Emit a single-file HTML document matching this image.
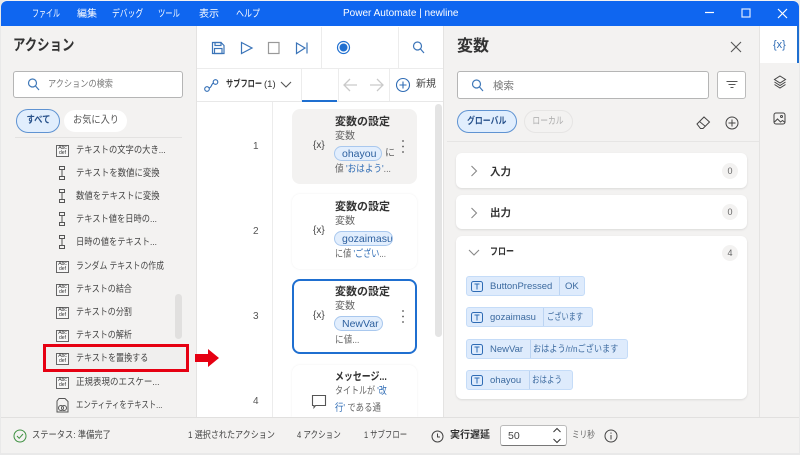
<!DOCTYPE html>
<html lang="ja"><head><meta charset="utf-8"><title>Power Automate</title>
<style>
html,body{margin:0;padding:0;width:800px;height:455px;overflow:hidden;background:#e9e9e9}
body{font-family:"Liberation Sans","Noto Sans CJK JP",sans-serif;position:relative;color:#323130}
.a,.t{position:absolute}
.t{white-space:nowrap;line-height:14px;font-size:10px;transform-origin:left center}
svg{position:absolute;overflow:visible}
.abc{position:absolute;left:56px;width:11px;height:10px;border:1px solid #666;background:#f7f7f7;font-size:5px;line-height:5px;text-align:center;color:#333}
.l{left:76px;color:#444;font-size:9.6px}
.card{position:absolute;left:292px;width:125px;border-radius:8px;background:#fff;box-shadow:0 0 2px rgba(0,0,0,.07)}
.pill{position:absolute;left:334px;height:15px;line-height:14px;border:1px solid #a9c8ee;border-radius:8px;background:#e2eefd;color:#2c5f9e;font-size:10.5px;box-sizing:border-box;padding-left:7px;overflow:hidden}
.vb{position:absolute;left:466px;height:20px;border:1px solid #c5dcf8;border-radius:3px;background:#deebfc;box-sizing:border-box;color:#3c6a9f;font-size:9.5px;line-height:19px;white-space:nowrap}
.vb i{position:absolute;top:0;bottom:0;width:1px;background:#bcd4f2}
.vb span{position:absolute;top:0;transform-origin:left center}
.acc{position:absolute;left:456px;width:291px;background:#fff;border-radius:6px;box-shadow:0 1px 2px rgba(0,0,0,.1)}
.bd{position:absolute;left:722px;width:16px;height:16px;border-radius:50%;background:#f3f2f1;color:#666;font-size:9px;line-height:16px;text-align:center}
.q{color:#2f6cb5}
.c{display:inline-block}
</style></head><body>
<!-- window -->
<div class="a" style="left:1px;top:0;width:798px;height:453px;background:#f3f2f1;border-radius:6px;overflow:hidden"></div>
<!-- title bar -->
<div class="a" style="left:1px;top:1px;width:798px;height:25px;background:#0f66f0;border-radius:6px 6px 0 0"></div>
<div class="t" style="left:32px;top:8px;color:#fff;transform:scaleX(.7)">ファイル</div>
<div class="t" style="left:77px;top:8px;color:#fff">編集</div>
<div class="t" style="left:112px;top:8px;color:#fff;transform:scaleX(.78)">デバッグ</div>
<div class="t" style="left:158px;top:8px;color:#fff;transform:scaleX(.73)">ツール</div>
<div class="t" style="left:199px;top:8px;color:#fff">表示</div>
<div class="t" style="left:236px;top:8px;color:#fff;transform:scaleX(.8)">ヘルプ</div>
<div class="t" style="left:343px;top:7px;color:#fff;font-size:10px">Power Automate | newline</div>
<svg style="left:0;top:0" width="800" height="30" fill="none" stroke="#fff" stroke-width="1.2">
<path d="M705 12.500h9"/><rect x="742" y="9" width="8" height="8" stroke="#dfeaff"/><path d="M778 9l9 9M787 9l-9 9"/></svg>

<!-- left panel -->
<div class="t" style="left:13px;top:37px;font-size:15.5px;line-height:18px;font-weight:bold;color:#333;transform:scaleX(.8)">アクション</div>
<div class="a" style="left:13px;top:71px;width:168px;height:25px;background:#fff;border:1px solid #b5b5b5;border-radius:3px"></div>
<svg style="left:27px;top:78px" width="14" height="14" fill="none" stroke="#3f78b8" stroke-width="1.2"><circle cx="5.500" cy="5" r="4"/><path d="M8.500 8l3.500 4"/></svg>
<div class="t" style="left:48px;top:78px;color:#777;font-size:9.5px;transform:scaleX(.86)">アクションの検索</div>
<div class="a" style="left:16px;top:109px;width:44px;height:24px;background:#e1eefd;border:1px solid #5f93d2;border-radius:12px;box-sizing:border-box;text-align:center;line-height:22px;font-size:10px;color:#26508a;font-weight:bold"><span class="c" style="transform:scaleX(.83)">すべて</span></div>
<div class="a" style="left:64px;top:110px;width:63px;height:22px;background:#fff;border-radius:12px;text-align:center;line-height:22px;font-size:10px;color:#555"><span class="c" style="transform:scaleX(.92)">お気に入り</span></div>
<div class="a" style="left:15px;top:137px;width:167px;height:1px;background:#e3e2e1"></div>

<div class="abc" style="top:145px">Abc<br>def</div><div class="t l" style="top:144px;transform:scaleX(.865)">テキストの文字の大き...</div>
<svg style="left:58px;top:166px" width="8" height="15" fill="none" stroke="#555"><rect x="1.500" y=".5" width="5" height="3"/><rect x="1.500" y="10.500" width="5" height="3"/><path d="M4 4v6"/></svg><div class="t l" style="top:167px;transform:scaleX(.875)">テキストを数値に変換</div>
<svg style="left:58px;top:189px" width="8" height="15" fill="none" stroke="#555"><rect x="1.500" y=".5" width="5" height="3"/><rect x="1.500" y="10.500" width="5" height="3"/><path d="M4 4v6"/></svg><div class="t l" style="top:190px;transform:scaleX(.875)">数値をテキストに変換</div>
<svg style="left:58px;top:212px" width="8" height="15" fill="none" stroke="#555"><rect x="1.500" y=".5" width="5" height="3"/><rect x="1.500" y="10.500" width="5" height="3"/><path d="M4 4v6"/></svg><div class="t l" style="top:213px;transform:scaleX(.86)">テキスト値を日時の...</div>
<svg style="left:58px;top:235px" width="8" height="15" fill="none" stroke="#555"><rect x="1.500" y=".5" width="5" height="3"/><rect x="1.500" y="10.500" width="5" height="3"/><path d="M4 4v6"/></svg><div class="t l" style="top:236px;transform:scaleX(.86)">日時の値をテキスト...</div>
<div class="abc" style="top:261px">Abc<br>def</div><div class="t l" style="top:260px;transform:scaleX(.815)">ランダム テキストの作成</div>
<div class="abc" style="top:284px">Abc<br>def</div><div class="t l" style="top:283px;transform:scaleX(.835)">テキストの結合</div>
<div class="abc" style="top:307px">Abc<br>def</div><div class="t l" style="top:306px;transform:scaleX(.835)">テキストの分割</div>
<div class="abc" style="top:330px">Abc<br>def</div><div class="t l" style="top:329px;transform:scaleX(.835)">テキストの解析</div>
<div class="a" style="left:43px;top:344px;width:146px;height:28px;background:#f0efee;border:3px solid #e60012;box-sizing:border-box"></div>
<div class="abc" style="top:353px">Abc<br>def</div><div class="t l" style="top:352px;transform:scaleX(.84)">テキストを置換する</div>
<div class="abc" style="top:377px">Abc<br>def</div><div class="t l" style="top:376px;transform:scaleX(.885)">正規表現のエスケー...</div>
<svg style="left:56px;top:398px" width="13" height="15" fill="none" stroke="#555"><path d="M3 .5h6l3 3v10.500h-11v-11z"/><circle cx="5" cy="10" r="2.500"/><circle cx="8" cy="10" r="2.500"/></svg><div class="t l" style="top:399px;transform:scaleX(.77)">エンティティをテキスト...</div>
<div class="a" style="left:175px;top:294px;width:7px;height:45px;background:#e1e0df;border-radius:4px"></div>

<!-- center panel -->
<div class="a" style="left:197px;top:26px;width:246px;height:391px;background:#fff;overflow:hidden"></div>
<div class="a" style="left:196px;top:26px;width:1px;height:391px;background:#e4e3e2"></div>
<div class="a" style="left:197px;top:68px;width:246px;height:1px;background:#ececec"></div>
<div class="a" style="left:197px;top:101px;width:246px;height:1px;background:#e8e8e8"></div>
<div class="a" style="left:321px;top:27px;width:1px;height:41px;background:#ececec"></div>
<div class="a" style="left:398px;top:27px;width:1px;height:41px;background:#ececec"></div>
<div class="a" style="left:301px;top:69px;width:1px;height:32px;background:#ececec"></div>
<div class="a" style="left:338px;top:69px;width:1px;height:32px;background:#ececec"></div>
<div class="a" style="left:389px;top:69px;width:1px;height:32px;background:#ececec"></div>
<div class="a" style="left:302px;top:100px;width:35px;height:1.5px;background:#1f6fd0"></div>
<div class="a" style="left:272px;top:102px;width:1px;height:315px;background:#ececec"></div>
<svg style="left:210px;top:40px" width="110" height="20" fill="none" stroke="#3b74b8" stroke-width="1.200">
<path d="M2.500 2.500h8.500l3 3v8h-11.500z"/><rect x="5" y="2.500" width="6" height="3"/><rect x="4.500" y="8.500" width="7.500" height="5"/>
<path d="M31.500 2.500l10.500 5.500-10.500 5.500z"/>
<rect x="58.500" y="2.500" width="10.500" height="11" stroke="#999"/>
<path d="M86.500 3l8.500 5-8.500 5.500zM97 2.500v11"/></svg>
<svg style="left:335px;top:39px" width="18" height="18"><circle cx="8.500" cy="8.500" r="6" fill="none" stroke="#1f6fd0" stroke-width="1.200"/><circle cx="8.500" cy="8.500" r="4" fill="#1f6fd0"/></svg>
<svg style="left:412px;top:41px" width="14" height="14" fill="none" stroke="#3b74b8" stroke-width="1.200"><circle cx="5.500" cy="5" r="4"/><path d="M8.500 8l3.500 4"/></svg>
<svg style="left:204px;top:78px" width="16" height="16" fill="none" stroke="#2f6cb5" stroke-width="1.100"><circle cx="3" cy="11" r="2.300"/><circle cx="11.500" cy="4" r="2.300"/><path d="M5 10c3-.5 2-4 4.500-5"/></svg>
<div class="t" style="left:226px;top:78px;font-size:9.500px;font-weight:bold;color:#333;transform:scaleX(.76)">サブフロー</div>
<div class="t" style="left:264px;top:78px;font-size:9.500px;color:#333">(1)</div>
<svg style="left:280px;top:80px" width="12" height="10" fill="none" stroke="#555" stroke-width="1.100"><path d="M1 2l5 5 5-5"/></svg>
<svg style="left:342px;top:77px" width="46" height="16" fill="none" stroke="#c9c9c9" stroke-width="1.300"><path d="M2 8h13M8 2L2 8l6 6M28 8h13M35 2l6 6-6 6"/></svg>
<svg style="left:395px;top:77px" width="16" height="16" fill="none" stroke="#2f6cb5" stroke-width="1.100"><circle cx="8" cy="8" r="6.500"/><path d="M8 4.500v7M4.500 8h7"/></svg>
<div class="t" style="left:416px;top:78px;color:#444">新規</div>
<div class="a" style="left:435px;top:104px;width:7px;height:233px;background:#e4e4e4;border-radius:4px"></div>

<div class="t" style="left:253px;top:140px;color:#555">1</div>
<div class="t" style="left:253px;top:225px;color:#555">2</div>
<div class="t" style="left:253px;top:310px;color:#555">3</div>
<div class="t" style="left:253px;top:395px;color:#555">4</div>

<div class="card" style="top:109px;height:75px;background:#f3f2f1;box-shadow:none"></div>
<div class="t" style="left:313px;top:139px;color:#444">{x}</div>
<div class="t" style="left:335px;top:115px;font-size:11px;font-weight:bold;color:#333">変数の設定</div>
<div class="t" style="left:335px;top:130px;color:#666">変数</div>
<div class="pill" style="top:146px;width:48px">ohayou</div>
<div class="t" style="left:385px;top:147px;color:#666">に</div>
<div class="t" style="left:335px;top:163px;color:#666;transform:scaleX(.86)">値 <span class="q">'おはよう'</span>...</div>
<svg style="left:400px;top:139px" width="6" height="16" fill="#555"><circle cx="3" cy="2" r=".9"/><circle cx="3" cy="7.500" r=".9"/><circle cx="3" cy="13" r=".9"/></svg>

<div class="card" style="top:194px;height:75px"></div>
<div class="t" style="left:313px;top:224px;color:#444">{x}</div>
<div class="t" style="left:335px;top:200px;font-size:11px;font-weight:bold;color:#333">変数の設定</div>
<div class="t" style="left:335px;top:215px;color:#666">変数</div>
<div class="pill" style="top:231px;width:59px">gozaimasu</div>
<div class="t" style="left:335px;top:248px;color:#666;transform:scaleX(.81)">に値 <span class="q">'ござい</span>...</div>

<div class="card" style="top:279px;height:75px;border:2px solid #1f6fd0;box-sizing:border-box;box-shadow:none"></div>
<div class="t" style="left:313px;top:309px;color:#444">{x}</div>
<div class="t" style="left:335px;top:285px;font-size:11px;font-weight:bold;color:#333">変数の設定</div>
<div class="t" style="left:335px;top:300px;color:#666">変数</div>
<div class="pill" style="top:316px;width:49px">NewVar</div>
<div class="t" style="left:335px;top:334px;color:#666;transform:scaleX(.86)">に値...</div>
<svg style="left:400px;top:309px" width="6" height="16" fill="#555"><circle cx="3" cy="2" r=".9"/><circle cx="3" cy="7.500" r=".9"/><circle cx="3" cy="13" r=".9"/></svg>

<div class="card" style="top:365px;height:52px;border-radius:8px 8px 0 0"></div>
<svg style="left:311px;top:394px" width="16" height="15" fill="none" stroke="#555" stroke-width="1.100"><path d="M1.500 1.500h13v10h-10l-1.500 2v-2h-1.500z"/></svg>
<div class="t" style="left:335px;top:370px;font-size:11px;font-weight:bold;color:#333;transform:scaleX(.81)">メッセージ...</div>
<div class="t" style="left:335px;top:385px;color:#666;transform:scaleX(.8)">タイトルが <span class="q">'改</span></div>
<div class="t" style="left:335px;top:402px;color:#666;transform:scaleX(.84)"><span class="q">行'</span> である通</div>

<!-- red arrow -->
<svg style="left:195px;top:349px" width="25" height="20"><path d="M0 5h13V0l11 9-11 9v-5H0z" fill="#e60012"/></svg>

<!-- right panel -->
<div class="a" style="left:443px;top:26px;width:1px;height:391px;background:#e4e3e2"></div>
<div class="a" style="left:759px;top:26px;width:1px;height:391px;background:#e4e3e2"></div>
<div class="t" style="left:457px;top:38px;font-size:16px;line-height:18px;font-weight:bold;color:#333">変数</div>
<svg style="left:730px;top:41px" width="12" height="12" fill="none" stroke="#555" stroke-width="1.100"><path d="M1 1l10 10M11 1L1 11"/></svg>
<div class="a" style="left:457px;top:71px;width:250px;height:26px;background:#fff;border:1px solid #b5b5b5;border-radius:3px"></div>
<svg style="left:471px;top:79px" width="14" height="14" fill="none" stroke="#3f78b8" stroke-width="1.2"><circle cx="5.500" cy="5" r="4"/><path d="M8.500 8l3.500 4"/></svg>
<div class="t" style="left:493px;top:79px;color:#777;font-size:10.500px">検索</div>
<div class="a" style="left:717px;top:71px;width:27px;height:26px;background:#fff;border:1px solid #bbb;border-radius:3px"></div>
<svg style="left:726px;top:80px" width="14" height="10" stroke="#555" fill="none"><path d="M.5 1.500h11M2.500 4.500h7M4.500 7.500h3"/></svg>
<div class="a" style="left:457px;top:110px;width:60px;height:23px;background:#e1eefd;border:1px solid #5f93d2;border-radius:12px;box-sizing:border-box;text-align:center;line-height:21px;font-size:9.500px;color:#26508a;font-weight:bold"><span class="c" style="transform:scaleX(.83)">グローバル</span></div>
<div class="a" style="left:524px;top:110px;width:49px;height:23px;background:#f3f2f1;border:1px solid #e6e5e4;border-radius:12px;box-sizing:border-box;text-align:center;line-height:21px;font-size:9.500px;color:#aaa"><span class="c" style="transform:scaleX(.82)">ローカル</span></div>
<svg style="left:696px;top:116px" width="15" height="14" fill="none" stroke="#444"><path d="M1 8L8 1l5.500 5L7 12.500H4.500z"/><path d="M3.500 5.500l6 5" stroke-width=".9"/></svg>
<svg style="left:725px;top:116px" width="14" height="14" fill="none" stroke="#444"><circle cx="7" cy="7" r="6"/><path d="M7 3.500v7M3.500 7h7"/></svg>
<div class="a" style="left:447px;top:141px;width:312px;height:1px;background:#e6e5e4"></div>

<div class="acc" style="top:153px;height:35px"></div>
<svg style="left:470px;top:165px" width="8" height="12" fill="none" stroke="#888" stroke-width="1.100"><path d="M1.500 1l5 5-5 5"/></svg>
<div class="t" style="left:490px;top:165px;font-size:10.500px;font-weight:bold;color:#333">入力</div>
<div class="bd" style="top:163px">0</div>

<div class="acc" style="top:195px;height:34px"></div>
<svg style="left:470px;top:207px" width="8" height="12" fill="none" stroke="#888" stroke-width="1.100"><path d="M1.500 1l5 5-5 5"/></svg>
<div class="t" style="left:490px;top:206px;font-size:10.500px;font-weight:bold;color:#333">出力</div>
<div class="bd" style="top:204px">0</div>

<div class="acc" style="top:236px;height:163px"></div>
<svg style="left:468px;top:249px" width="12" height="8" fill="none" stroke="#888" stroke-width="1.100"><path d="M1 1l5 5 5-5"/></svg>
<div class="t" style="left:490px;top:246px;font-size:10px;font-weight:bold;color:#333;transform:scaleX(.8)">フロー</div>
<div class="bd" style="top:245px">4</div>

<div class="vb" style="top:276px;width:119px"><span style="left:23px">ButtonPressed</span><i style="left:92px"></i><span style="left:98px">OK</span></div>
<div class="vb" style="top:307px;width:127px"><span style="left:23px">gozaimasu</span><i style="left:76px"></i><span style="left:80px;transform:scaleX(.76)">ございます</span></div>
<div class="vb" style="top:339px;width:162px"><span style="left:23px">NewVar</span><i style="left:63px"></i><span style="left:66px;transform:scaleX(.86)">おはよう/r/nございます</span></div>
<div class="vb" style="top:370px;width:107px"><span style="left:23px">ohayou</span><i style="left:62px"></i><span style="left:65px;transform:scaleX(.79)">おはよう</span></div>
<svg style="left:471px;top:281px" width="13" height="100" fill="none" stroke="#2f6cb5">
<g><rect x=".5" y=".5" width="11" height="10" rx="2"/><path d="M3.500 3h5M6 3v5.500"/></g>
<g transform="translate(0 31)"><rect x=".5" y=".5" width="11" height="10" rx="2"/><path d="M3.500 3h5M6 3v5.500"/></g>
<g transform="translate(0 63)"><rect x=".5" y=".5" width="11" height="10" rx="2"/><path d="M3.500 3h5M6 3v5.500"/></g>
<g transform="translate(0 94)"><rect x=".5" y=".5" width="11" height="10" rx="2"/><path d="M3.500 3h5M6 3v5.500"/></g></svg>

<!-- right tabs -->
<div class="a" style="left:760px;top:26px;width:39px;height:37px;background:#fff;border-right:2px solid #1f6fd0;box-sizing:border-box"></div>
<div class="t" style="left:773px;top:38px;font-size:11px;color:#2f6cb5">{x}</div>
<svg style="left:773px;top:75px" width="14" height="14" fill="none" stroke="#444"><path d="M7 1l5.500 3.500L7 8 1.500 4.500zM1.500 7L7 10.500 12.500 7M1.500 9.500L7 13l5.500-3.500"/></svg>
<svg style="left:773px;top:112px" width="14" height="14" fill="none" stroke="#444"><rect x="1" y="1" width="11" height="11" rx="2"/><path d="M1.500 10l3-3 3 3 2-1.500 2.500 2"/><circle cx="8.500" cy="4.500" r="1"/></svg>

<!-- status bar -->
<div class="a" style="left:1px;top:417px;width:798px;height:36px;background:#f3f2f1;border-top:1px solid #e1e0df;box-sizing:border-box"></div>
<svg style="left:13px;top:429px" width="14" height="14" fill="none" stroke="#3f9142"><circle cx="7" cy="7" r="6"/><path d="M4 7l2.200 2.300L10 5"/></svg>
<div class="t" style="left:32px;top:429px;font-size:9.600px;color:#444;transform:scaleX(.86)">ステータス: 準備完了</div>
<div class="t" style="left:188px;top:429px;font-size:9.600px;color:#444;transform:scaleX(.84)">1 選択されたアクション</div>
<div class="t" style="left:297px;top:429px;font-size:9.600px;color:#444;transform:scaleX(.79)">4 アクション</div>
<div class="t" style="left:364px;top:429px;font-size:9.600px;color:#444;transform:scaleX(.77)">1 サブフロー</div>
<svg style="left:431px;top:430px" width="13" height="13" fill="none" stroke="#444"><circle cx="6.500" cy="6.500" r="5.500"/><path d="M6.500 3.500v3.500h2.500"/></svg>
<div class="t" style="left:450px;top:429px;font-size:10px;font-weight:bold;color:#333">実行遅延</div>
<div class="a" style="left:500px;top:425px;width:67px;height:21px;background:#fff;border:1px solid #bbb;border-bottom-color:#777;border-radius:3px;box-sizing:border-box"></div>
<div class="t" style="left:508px;top:429px;color:#444;font-size:10.500px">50</div>
<svg style="left:552px;top:426px" width="10" height="19" fill="none" stroke="#333"><path d="M1.500 6L5 2.500 8.500 6M1.500 13L5 16.500 8.500 13"/></svg>
<div class="t" style="left:572px;top:429px;font-size:9.500px;color:#666;transform:scaleX(.8)">ミリ秒</div>
<svg style="left:604px;top:429px" width="14" height="14" fill="none" stroke="#444"><circle cx="7" cy="7" r="6"/><path d="M7 6v4.500M7 3.500v1.300"/></svg>
</body></html>
